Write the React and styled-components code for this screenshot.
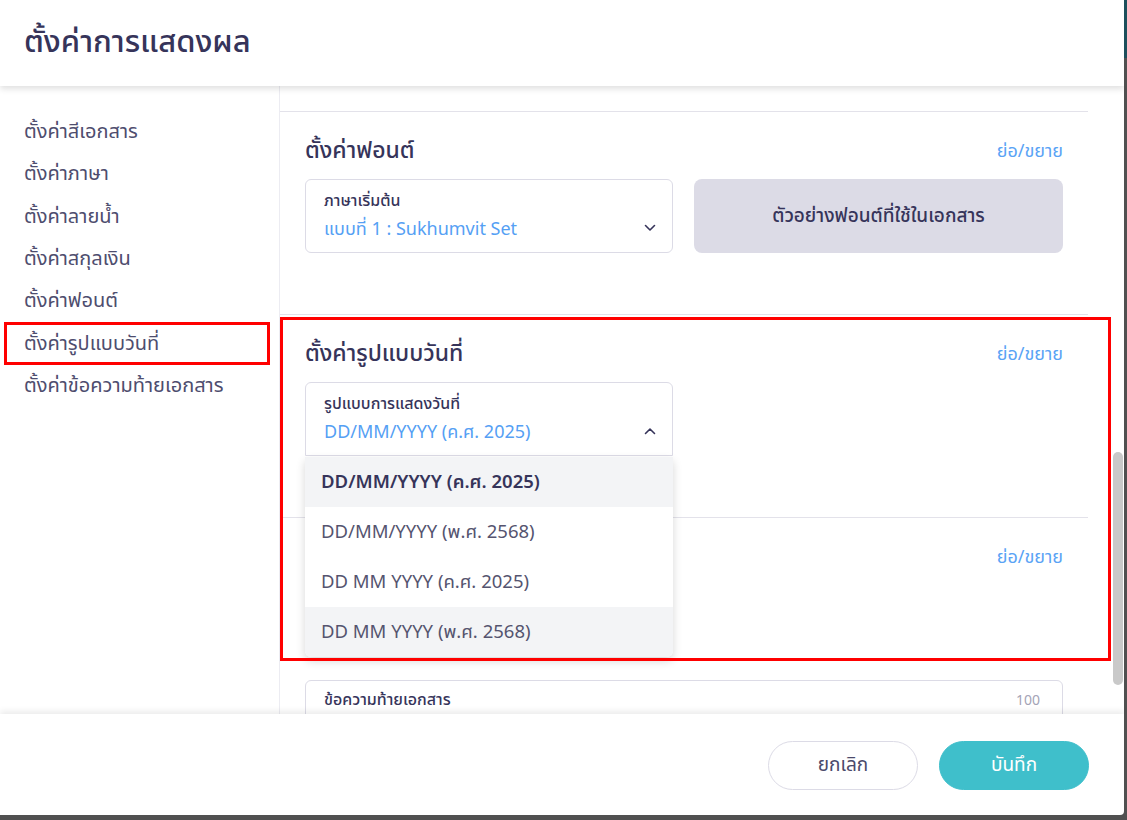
import React, { useState } from "react";
import styled, { createGlobalStyle } from "styled-components";

/***************** STYLES ******************/
const GlobalStyle = createGlobalStyle`
  html {
    background: #505050 linear-gradient(#1d4f5c, #1d4f5c) no-repeat top / 100% 58px;
  }
  body {
    margin: 0;
    background: transparent;
    font-family: "Noto Sans Thai", "Noto Sans", "DejaVu Sans", sans-serif;
    color: #36345a;
  }
  * { box-sizing: border-box; }
`;

const Modal = styled.div`
  width: 1124px;
  height: 815px;
  background: #fff;
  border-bottom-right-radius: 4px;
  display: flex;
  flex-direction: column;
  overflow: hidden;
`;

const Header = styled.header`
  flex: none;
  height: 86px;
  display: flex;
  align-items: center;
  padding: 0 24px 2px;
  position: relative;
  z-index: 2;
  box-shadow: 0 3px 6px rgba(0, 0, 0, 0.12);
  h1 {
    margin: 0;
    font-size: 31px;
    font-weight: 500;
    color: #36345a;
  }
`;

const Body = styled.div`
  flex: 1;
  display: flex;
  min-height: 0;
`;

const Sidebar = styled.nav`
  flex: none;
  width: 280px;
  border-right: 1px solid #ececf2;
  padding: 25px 9px 0 4px;
`;

const NavItem = styled.div`
  height: 42.3px;
  display: flex;
  align-items: center;
  padding-left: 17px;
  border: 3px solid ${({ $marked }) => ($marked ? "#ff0000" : "transparent")};
  font-size: 20px;
  color: #4e4d6e;
`;

const Content = styled.div`
  flex: 1;
  position: relative;
  overflow: hidden;
  padding-right: 36px;
`;

const PrevTail = styled.div`
  height: 25px;
`;

const Section = styled.section`
  border-top: 1px solid #e3e2ea;
  padding: 24px 25px 61px;
`;

const SectionHead = styled.div`
  height: 30px;
  display: flex;
  align-items: center;
  justify-content: space-between;
  margin-bottom: ${({ $gap }) => $gap || 13}px;
`;

const SectionTitle = styled.h2`
  margin: 0;
  font-size: 23px;
  font-weight: 500;
  color: #36345a;
`;

const ToggleLink = styled.span`
  font-size: 18px;
  color: #5aa3f5;
`;

const Row = styled.div`
  display: grid;
  grid-template-columns: 368px 369px;
  gap: 21px;
`;

const SelectBox = styled.div`
  position: relative;
  height: 74px;
  border: 1px solid #dcdbe6;
  border-radius: ${({ $open }) => ($open ? "6px 6px 0 0" : "6px")};
  padding: 10px 40px 10px 18px;
  display: flex;
  flex-direction: column;
  justify-content: center;
  gap: 3px;
  svg.chevron {
    position: absolute;
    right: 16px;
    top: 44px;
  }
`;

const SelectLabel = styled.span`
  font-size: 16px;
  font-weight: 500;
  color: #36345a;
`;

const SelectValue = styled.span`
  font-size: 18px;
  color: #55a0f4;
`;

const PreviewButton = styled.button`
  height: 74px;
  border: none;
  border-radius: 8px;
  background: #dcdbe6;
  font-family: inherit;
  font-size: 19px;
  font-weight: 500;
  color: #36345a;
`;

const Dropdown = styled.ul`
  position: absolute;
  top: calc(100% + 2px);
  left: -1px;
  right: -1px;
  margin: 0;
  padding: 0;
  list-style: none;
  background: #fff;
  border-radius: 0 0 6px 6px;
  box-shadow: 0 4px 10px rgba(0, 0, 0, 0.16);
  z-index: 5;
  overflow: hidden;
`;

const Option = styled.li`
  height: 50px;
  display: flex;
  align-items: center;
  padding-left: 16px;
  font-size: 18.5px;
  font-weight: ${({ $selected }) => ($selected ? 600 : 400)};
  color: ${({ $selected }) => ($selected ? "#36345a" : "#55546f")};
  background: ${({ $shaded }) => ($shaded ? "#f3f4f6" : "#fff")};
`;

const TextBox = styled.div`
  height: 120px;
  border: 1px solid #dcdbe6;
  border-radius: 6px;
  padding: 7px 22px 0 18px;
  display: flex;
  justify-content: space-between;
  align-items: flex-start;
  span:first-child {
    font-size: 16px;
    font-weight: 500;
    color: #36345a;
  }
  span:last-child {
    font-size: 14px;
    color: #a4a3b6;
    padding-top: 2px;
  }
`;

const ScrollThumb = styled.div`
  position: absolute;
  right: 1px;
  top: 366px;
  width: 10px;
  height: 233px;
  border-radius: 5px;
  background: #c9c9c9;
`;

const Highlight = styled.div`
  position: absolute;
  left: 0;
  top: 231px;
  width: 831px;
  height: 344px;
  border: 3px solid #ff0000;
  pointer-events: none;
  z-index: 10;
`;

const Footer = styled.footer`
  flex: none;
  height: 101px;
  display: flex;
  align-items: center;
  justify-content: flex-end;
  gap: 21px;
  padding: 2px 35px 0 0;
  position: relative;
  z-index: 2;
  box-shadow: 0 -3px 6px rgba(0, 0, 0, 0.08);
`;

const Button = styled.button`
  width: 150px;
  height: 49px;
  border-radius: 25px;
  font-family: inherit;
  font-size: 19px;
  border: 1px solid ${({ $primary }) => ($primary ? "#3fbfcb" : "#dcdbe6")};
  background: ${({ $primary }) => ($primary ? "#3fbfcb" : "#fff")};
  color: ${({ $primary }) => ($primary ? "#fff" : "#4b4a6b")};
`;

/***************** COMPONENT ******************/
const Chevron = ({ up }) => (
  <svg className="chevron" width="12" height="8" viewBox="0 0 12 8" fill="none">
    <path
      d={up ? "M1.5 6.5 6 2l4.5 4.5" : "M1.5 1.5 6 6l4.5-4.5"}
      stroke="#36345a"
      strokeWidth="1.6"
      strokeLinecap="round"
      strokeLinejoin="round"
    />
  </svg>
);

const navItems = [
  "ตั้งค่าสีเอกสาร",
  "ตั้งค่าภาษา",
  "ตั้งค่าลายน้ำ",
  "ตั้งค่าสกุลเงิน",
  "ตั้งค่าฟอนต์",
  "ตั้งค่ารูปแบบวันที่",
  "ตั้งค่าข้อความท้ายเอกสาร",
];

const dateFormats = [
  "DD/MM/YYYY (ค.ศ. 2025)",
  "DD/MM/YYYY (พ.ศ. 2568)",
  "DD MM YYYY (ค.ศ. 2025)",
  "DD MM YYYY (พ.ศ. 2568)",
];

const App = () => {
  const [dateFormat, setDateFormat] = useState(0);
  const hovered = 3;

  return (
    <>
      <GlobalStyle />
      <Modal>
        <Header>
          <h1>ตั้งค่าการแสดงผล</h1>
        </Header>
        <Body>
          <Sidebar>
            {navItems.map((item) => (
              <NavItem key={item} $marked={item === "ตั้งค่ารูปแบบวันที่"}>
                {item}
              </NavItem>
            ))}
          </Sidebar>
          <Content>
            <PrevTail />
            <Section>
              <SectionHead>
                <SectionTitle>ตั้งค่าฟอนต์</SectionTitle>
                <ToggleLink>ย่อ/ขยาย</ToggleLink>
              </SectionHead>
              <Row>
                <SelectBox>
                  <SelectLabel>ภาษาเริ่มต้น</SelectLabel>
                  <SelectValue>แบบที่ 1 : Sukhumvit Set</SelectValue>
                  <Chevron />
                </SelectBox>
                <PreviewButton>ตัวอย่างฟอนต์ที่ใช้ในเอกสาร</PreviewButton>
              </Row>
            </Section>
            <Section>
              <SectionHead>
                <SectionTitle>ตั้งค่ารูปแบบวันที่</SectionTitle>
                <ToggleLink>ย่อ/ขยาย</ToggleLink>
              </SectionHead>
              <Row>
                <SelectBox $open>
                  <SelectLabel>รูปแบบการแสดงวันที่</SelectLabel>
                  <SelectValue>{dateFormats[dateFormat]}</SelectValue>
                  <Chevron up />
                  <Dropdown>
                    {dateFormats.map((f, i) => (
                      <Option
                        key={f}
                        $selected={i === dateFormat}
                        $shaded={i === dateFormat || i === hovered}
                        onClick={() => setDateFormat(i)}
                      >
                        {f}
                      </Option>
                    ))}
                  </Dropdown>
                </SelectBox>
              </Row>
            </Section>
            <Section>
              <SectionHead $gap={108}>
                <SectionTitle>ตั้งค่าข้อความท้ายเอกสาร</SectionTitle>
                <ToggleLink>ย่อ/ขยาย</ToggleLink>
              </SectionHead>
              <TextBox>
                <span>ข้อความท้ายเอกสาร</span>
                <span>100</span>
              </TextBox>
            </Section>
            <ScrollThumb />
            <Highlight />
          </Content>
        </Body>
        <Footer>
          <Button>ยกเลิก</Button>
          <Button $primary>บันทึก</Button>
        </Footer>
      </Modal>
    </>
  );
};

export default App;
